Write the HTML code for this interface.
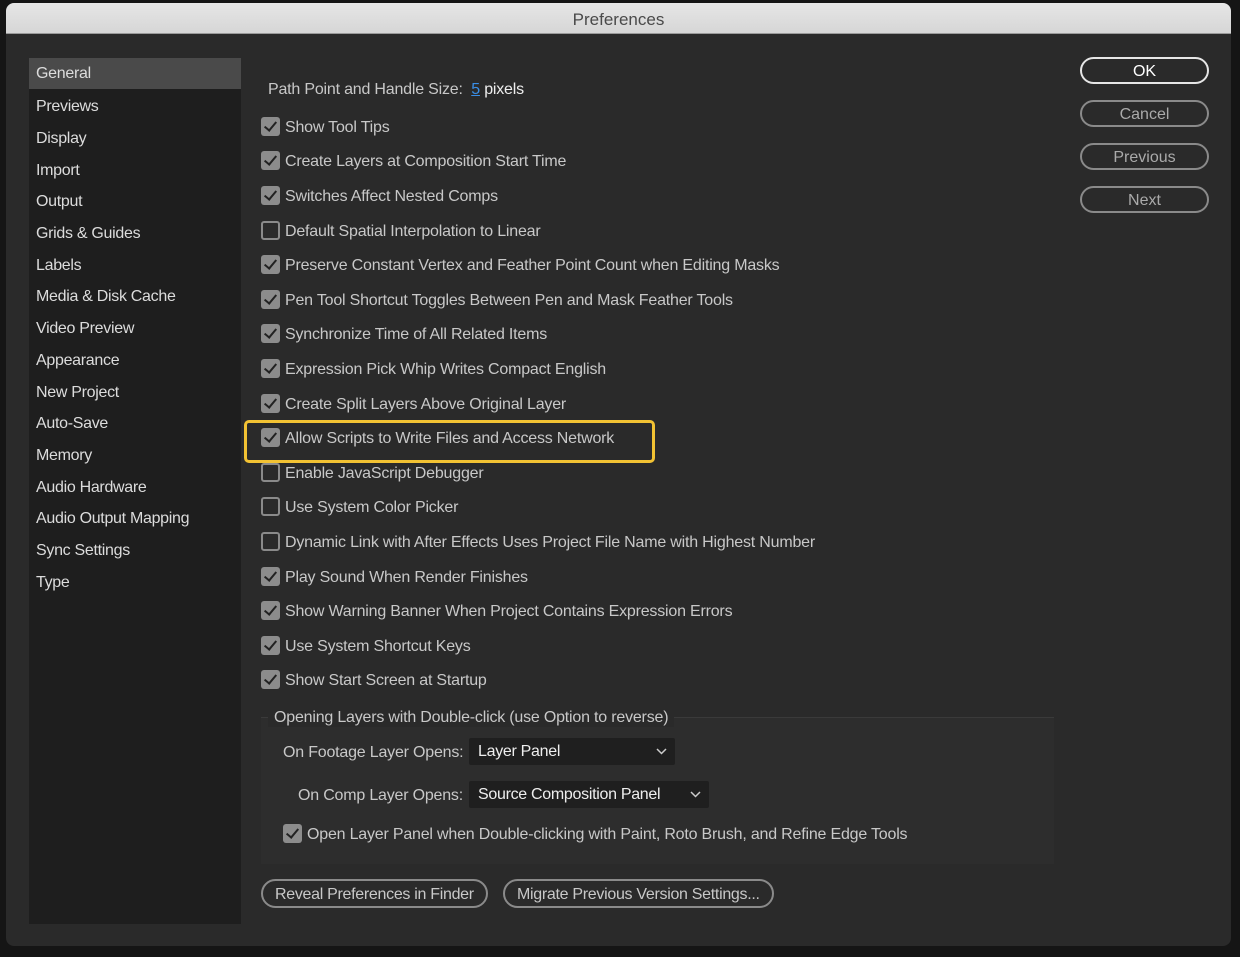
<!DOCTYPE html>
<html><head><meta charset="utf-8"><style>
*{margin:0;padding:0;box-sizing:border-box}
body{width:1240px;height:957px;background:#151515;font-family:"Liberation Sans",sans-serif;position:relative;overflow:hidden;color:#c4c4c4}
.win{position:absolute;left:6px;top:3px;width:1225px;height:943px;background:#2a2a2a;border-radius:8px;overflow:hidden}
.title{position:absolute;left:0;top:0;width:100%;height:31px;background:linear-gradient(#e6e6e6,#d6d6d6);border-bottom:1px solid #9a9a9a;text-align:center;font-size:17px;line-height:34px;color:#4a4a4a}
.side{position:absolute;left:23px;top:55px;width:212px;height:866px;background:#1e1e1e}
.side div{position:absolute;left:7px;font-size:16px;color:#dcdcdc;letter-spacing:-0.3px;margin-top:1px}
.side .sel{left:0;width:212px;height:31px;background:#4a4a4a;padding-left:7px;line-height:31px;top:0;margin-top:0}
.t{position:absolute;font-size:16px;letter-spacing:-0.2px;white-space:nowrap;color:#c8c8c8;margin-top:2px}
.cb{position:absolute;width:19px;height:19px;border-radius:3px}
.on{background:#8c8c8c}
.on:after{content:"";position:absolute;left:6px;top:2px;width:5px;height:10px;border:solid #222;border-width:0 2.5px 2.5px 0;transform:rotate(40deg)}
.off{border:2px solid #8a8a8a}
.btn{position:absolute;left:1074px;width:129px;height:27px;border:2px solid #8a8a8a;border-radius:14px;text-align:center;font-size:16px;line-height:25px;color:#aaa}
.pb{position:absolute;height:29px;border:2px solid #8a8a8a;border-radius:15px;font-size:16px;line-height:27px;color:#c8c8c8;padding:0 12px;letter-spacing:-0.3px}
.dd{position:absolute;height:27px;background:#1f1f1f;border-radius:2px;color:#eee;font-size:16px;line-height:28px;padding-left:9px;letter-spacing:-0.3px}
.dd svg{position:absolute;right:8px;top:10px}
</style></head><body>
<div class="win">
<div class="title">Preferences</div>
<div class="side">
<div class="sel">General</div>
<div style="top:39px">Previews</div>
<div style="top:71px">Display</div>
<div style="top:103px">Import</div>
<div style="top:134px">Output</div>
<div style="top:166px">Grids &amp; Guides</div>
<div style="top:198px">Labels</div>
<div style="top:229px">Media &amp; Disk Cache</div>
<div style="top:261px">Video Preview</div>
<div style="top:293px">Appearance</div>
<div style="top:325px">New Project</div>
<div style="top:356px">Auto-Save</div>
<div style="top:388px">Memory</div>
<div style="top:420px">Audio Hardware</div>
<div style="top:451px">Audio Output Mapping</div>
<div style="top:483px">Sync Settings</div>
<div style="top:515px">Type</div>
</div>
<div class="t" style="left:262px;top:76px">Path Point and Handle Size:&nbsp; <span style="color:#3a8ee6;text-decoration:underline">5</span> <span style="color:#eee">pixels</span></div>
<div class="btn" style="top:54px;border-color:#e6e6e6;color:#fff">OK</div>
<div class="btn" style="top:97px">Cancel</div>
<div class="btn" style="top:140px">Previous</div>
<div class="btn" style="top:183px">Next</div>
<div style="position:absolute;left:238px;top:417px;width:411px;height:43px;border:3px solid #f2c233;border-radius:5px"></div>
<div style="position:absolute;left:255px;top:714px;width:793px;height:147px;background:#2d2d2d;border-top:1px solid #3a3a3a"></div>
<div class="t" style="left:262px;top:704px;background:#2a2a2a;padding:0 6px">Opening Layers with Double-click (use Option to reverse)</div>
<div class="t" style="left:277px;top:739px">On Footage Layer Opens:</div>
<div class="dd" style="left:463px;top:735px;width:206px">Layer Panel<svg width="11" height="7"><path d="M1 1l4.5 4.5L10 1" stroke="#ccc" stroke-width="1.5" fill="none"/></svg></div>
<div class="t" style="left:292px;top:782px">On Comp Layer Opens:</div>
<div class="dd" style="left:463px;top:778px;width:240px">Source Composition Panel<svg width="11" height="7"><path d="M1 1l4.5 4.5L10 1" stroke="#ccc" stroke-width="1.5" fill="none"/></svg></div>
<div class="cb on" style="left:277px;top:821px"></div>
<div class="t" style="left:301px;top:821px">Open Layer Panel when Double-clicking with Paint, Roto Brush, and Refine Edge Tools</div>
<div class="pb" style="left:255px;top:876px">Reveal Preferences in Finder</div>
<div class="pb" style="left:497px;top:876px">Migrate Previous Version Settings...</div>
</div>
<div style="position:absolute;left:0;top:0">
<div class="cb on" style="left:261px;top:117px"></div><div class="t" style="left:285px;top:117px">Show Tool Tips</div>
<div class="cb on" style="left:261px;top:151px"></div><div class="t" style="left:285px;top:151px">Create Layers at Composition Start Time</div>
<div class="cb on" style="left:261px;top:186px"></div><div class="t" style="left:285px;top:186px">Switches Affect Nested Comps</div>
<div class="cb off" style="left:261px;top:221px"></div><div class="t" style="left:285px;top:221px">Default Spatial Interpolation to Linear</div>
<div class="cb on" style="left:261px;top:255px"></div><div class="t" style="left:285px;top:255px">Preserve Constant Vertex and Feather Point Count when Editing Masks</div>
<div class="cb on" style="left:261px;top:290px"></div><div class="t" style="left:285px;top:290px">Pen Tool Shortcut Toggles Between Pen and Mask Feather Tools</div>
<div class="cb on" style="left:261px;top:324px"></div><div class="t" style="left:285px;top:324px">Synchronize Time of All Related Items</div>
<div class="cb on" style="left:261px;top:359px"></div><div class="t" style="left:285px;top:359px">Expression Pick Whip Writes Compact English</div>
<div class="cb on" style="left:261px;top:394px"></div><div class="t" style="left:285px;top:394px">Create Split Layers Above Original Layer</div>
<div class="cb on" style="left:261px;top:428px"></div><div class="t" style="left:285px;top:428px">Allow Scripts to Write Files and Access Network</div>
<div class="cb off" style="left:261px;top:463px"></div><div class="t" style="left:285px;top:463px">Enable JavaScript Debugger</div>
<div class="cb off" style="left:261px;top:497px"></div><div class="t" style="left:285px;top:497px">Use System Color Picker</div>
<div class="cb off" style="left:261px;top:532px"></div><div class="t" style="left:285px;top:532px">Dynamic Link with After Effects Uses Project File Name with Highest Number</div>
<div class="cb on" style="left:261px;top:567px"></div><div class="t" style="left:285px;top:567px">Play Sound When Render Finishes</div>
<div class="cb on" style="left:261px;top:601px"></div><div class="t" style="left:285px;top:601px">Show Warning Banner When Project Contains Expression Errors</div>
<div class="cb on" style="left:261px;top:636px"></div><div class="t" style="left:285px;top:636px">Use System Shortcut Keys</div>
<div class="cb on" style="left:261px;top:670px"></div><div class="t" style="left:285px;top:670px">Show Start Screen at Startup</div>
</div>
</body></html>
